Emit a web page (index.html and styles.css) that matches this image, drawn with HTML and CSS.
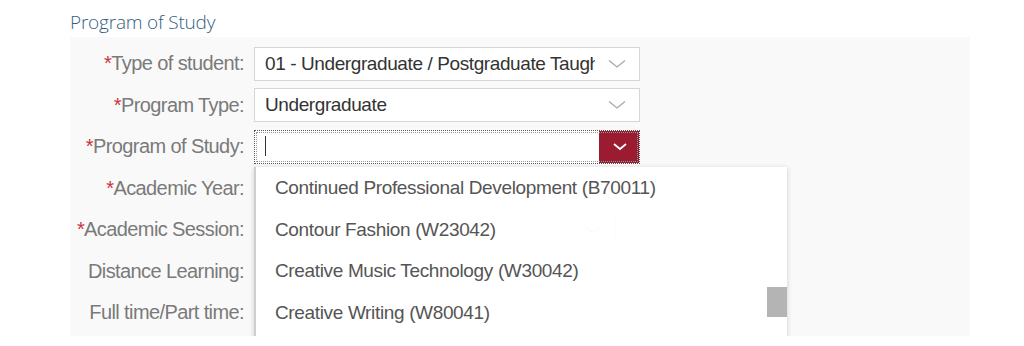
FILE: index.html
```html
<!DOCTYPE html>
<html lang="en">
  <head>
    <meta charset="UTF-8" />
    <title>Program of Study</title>
    <link rel="stylesheet" href="styles.css">
  </head>
  <body>
    <div class="section">
      <div class="section-title">Program of Study</div>

      <div class="panel">
        <div class="row">
          <label><span class="req">*</span>Type of student:</label>
          <div class="select">
            <span class="value">01 - Undergraduate / Postgraduate Taught</span>
            <span class="chev">
              <svg width="18" height="10" viewBox="0 0 18 10"><path d="M1 1.5 L9 8 L17 1.5" fill="none" stroke="#a9a9a9" stroke-width="1.3"/></svg>
            </span>
          </div>
        </div>

        <div class="row">
          <label><span class="req">*</span>Program Type:</label>
          <div class="select">
            <span class="value">Undergraduate</span>
            <span class="chev">
              <svg width="18" height="10" viewBox="0 0 18 10"><path d="M1 1.5 L9 8 L17 1.5" fill="none" stroke="#a9a9a9" stroke-width="1.3"/></svg>
            </span>
          </div>
        </div>

        <div class="row">
          <label><span class="req">*</span>Program of Study:</label>
          <div class="select focused">
            <span class="value"><span class="caret"></span></span>
            <span class="chev active">
              <svg width="16" height="10" viewBox="0 0 16 10"><path d="M2 2 L8 7 L14 2" fill="none" stroke="#fff" stroke-width="1.8"/></svg>
            </span>
          </div>
        </div>

        <div class="row">
          <label><span class="req">*</span>Academic Year:</label>
          <div class="select short">
            <span class="value"></span>
          </div>
        </div>

        <div class="row">
          <label><span class="req">*</span>Academic Session:</label>
          <div class="select short">
            <span class="value"></span>
            <span class="chev">
              <svg width="18" height="10" viewBox="0 0 18 10"><path d="M1 1.5 L9 8 L17 1.5" fill="none" stroke="#a9a9a9" stroke-width="1.3"/></svg>
            </span>
          </div>
        </div>

        <div class="row">
          <label>Distance Learning:</label>
          <div class="radios"><span class="radio"></span></div>
        </div>

        <div class="row">
          <label>Full time/Part time:</label>
          <div class="radios"><span class="radio"></span></div>
        </div>

        <ul class="dropdown">
          <li>Continued Professional Development (B70011)</li>
          <li>Contour Fashion (W23042)</li>
          <li>Creative Music Technology (W30042)</li>
          <li>Creative Writing (W80041)</li>
          <span class="thumb"></span>
        </ul>
      </div>
    </div>
  </body>
</html>
```

FILE: styles.css
```css
body {
  margin: 0;
  padding: 0;
  background: #fff;
  font-family: "Liberation Sans", Arial, sans-serif;
}

.section {
  padding: 10px 0 0 70px;
}

.section-title {
  font-family: "Open Sans", "Noto Sans", sans-serif;
  font-weight: 300;
  font-size: 19px;
  color: #34607f;
  height: 27px;
  line-height: 24px;
  letter-spacing: -0.2px;
}

.panel {
  position: relative;
  width: 900px;
  height: 299px;
  background: #f9f9f9;
  padding-top: 6px;
  box-sizing: border-box;
  overflow: hidden;
}

.row {
  display: flex;
  align-items: center;
  height: 41.5px;
}

.row label {
  width: 174px;
  text-align: right;
  font-size: 20px;
  color: #7a7a7a;
  letter-spacing: -0.6px;
  margin-right: 10px;
  white-space: nowrap;
}

.req {
  color: #c8343f;
}

.select {
  display: flex;
  align-items: center;
  width: 386px;
  height: 34px;
  background: #fff;
  border: 1px solid #d6d6d6;
  box-sizing: border-box;
  overflow: hidden;
}

.select.short {
  width: 362px;
}

.select .value {
  flex: 1;
  padding-left: 10px;
  font-size: 19px;
  letter-spacing: -0.4px;
  color: #333;
  white-space: nowrap;
  overflow: hidden;
  height: 34px;
  line-height: 34px;
}

.chev {
  width: 44px;
  height: 34px;
  display: flex;
  align-items: center;
  justify-content: center;
  flex-shrink: 0;
}

.select.focused {
  border: 1px dotted #555;
  outline: 1px dotted #999;
  outline-offset: -3px;
}

.chev.active {
  width: 41px;
  background: #9b1c31;
  margin-right: -1px;
}

.caret {
  display: inline-block;
  width: 1px;
  height: 20px;
  background: #333;
  vertical-align: middle;
  margin-top: -3px;
}

.radios {
  display: flex;
  align-items: center;
  padding-left: 8px;
}

.radio {
  width: 18px;
  height: 18px;
  border: 1px solid #ccc;
  border-radius: 50%;
  background: #fff;
}

.dropdown {
  position: absolute;
  left: 184px;
  top: 130px;
  width: 533px;
  height: 175px;
  margin: 0;
  padding: 0;
  list-style: none;
  background: rgba(255, 255, 255, 0.94);
  border-left: 2px solid #cfcfcf;
  box-sizing: border-box;
  box-shadow: 0 1px 5px rgba(0, 0, 0, 0.18);
}

.dropdown li {
  height: 41.5px;
  line-height: 41px;
  padding-left: 19px;
  font-size: 19px;
  letter-spacing: -0.35px;
  color: #555;
  white-space: nowrap;
}

.thumb {
  position: absolute;
  right: 0;
  top: 120px;
  width: 20px;
  height: 30px;
  background: #b4b4b4;
}
```
